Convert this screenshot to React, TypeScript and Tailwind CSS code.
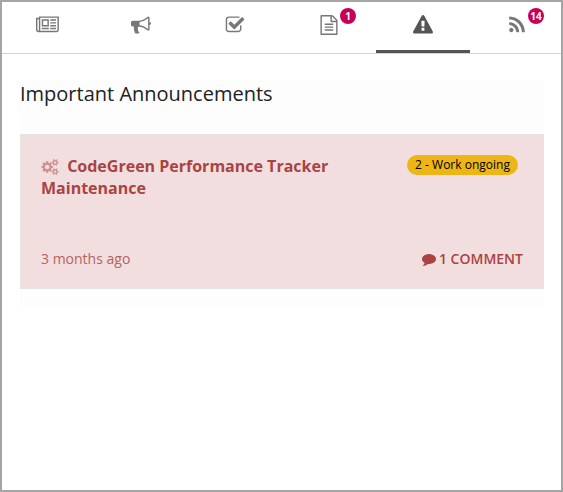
import React from "react";

const ICONS = {
  newspaper: {
    w: 2048,
    d: "M1024 512h-384v384h384v-384zm128 640v128h-640v-128h640zm0-768v640h-640v-640h640zm640 768v128h-512v-128h512zm0-256v128h-512v-128h512zm0-256v128h-512v-128h512zm0-256v128h-512v-128h512zm-1536 960v-960h-128v960q0 26 19 45t45 19 45-19 19-45zm1664 0v-1088h-1536v1088q0 33-11 64h1483q26 0 45-19t19-45zm128-1216v1216q0 80-56 136t-136 56h-1664q-80 0-136-56t-56-136v-1088h256v-128h1792z",
  },
  bullhorn: {
    w: 1792,
    d: "M1664 640q53 0 90.5 37.5t37.5 90.5-37.5 90.5-90.5 37.5v384q0 52-38 90t-90 38q-417-347-812-380-58 19-91 66t-31 100.5 40 92.5q-20 33-23 65.5t6 58 33.5 55 48 50 61.5 50.5q-29 58-111.5 83t-168.5 11.5-132-55.5q-7-23-29.5-87.5t-32-94.5-23-89-15-101 3.5-98.5 22-110.5h-122q-66 0-113-47t-47-113v-192q0-66 47-113t113-47h480q435 0 896-384 52 0 90 38t38 90v384zm-128 604v-954q-394 302-768 343v270q377 42 768 341z",
  },
  check: {
    w: 1792,
    d: "M1472 930v318q0 119-84.5 203.5t-203.5 84.5h-832q-119 0-203.5-84.5t-84.5-203.5v-832q0-119 84.5-203.5t203.5-84.5h832q63 0 117 25 15 7 18 23 3 17-9 29l-49 49q-10 10-23 10-3 0-9-2-23-6-45-6h-832q-66 0-113 47t-47 113v832q0 66 47 113t113 47h832q66 0 113-47t47-113v-254q0-13 9-22l64-64q10-10 23-10 6 0 12 3 20 8 20 29zm231-489l-814 814q-24 24-57 24t-57-24l-430-430q-24-24-24-57t24-57l110-110q24-24 57-24t57 24l263 263 647-647q24-24 57-24t57 24l110 110q24 24 24 57t-24 57z",
  },
  file: {
    w: 1792,
    d: "M1596 380q28 28 48 76t20 88v1152q0 40-28 68t-68 28h-1344q-40 0-68-28t-28-68v-1600q0-40 28-68t68-28h896q40 0 88 20t76 48zm-444-244v376h376q-10-29-22-41l-313-313q-12-12-41-22zm384 1528v-1024h-416q-40 0-68-28t-28-68v-416h-768v1536h1280zm-1024-864q0-14 9-23t23-9h704q14 0 23 9t9 23v64q0 14-9 23t-23 9h-704q-14 0-23-9t-9-23v-64zm736 224q14 0 23 9t9 23v64q0 14-9 23t-23 9h-704q-14 0-23-9t-9-23v-64q0-14 9-23t23-9h704zm0 256q14 0 23 9t9 23v64q0 14-9 23t-23 9h-704q-14 0-23-9t-9-23v-64q0-14 9-23t23-9h704z",
  },
  warning: {
    w: 1792,
    d: "M1024 1375v-190q0-14-9.5-23.5t-22.5-9.5h-192q-13 0-22.5 9.5t-9.5 23.5v190q0 14 9.5 23.5t22.5 9.5h192q13 0 22.5-9.5t9.5-23.5zm-2-374l18-459q0-12-10-19-13-11-24-11h-220q-11 0-24 11-10 7-10 21l17 457q0 10 10 16.5t24 6.5h185q14 0 23.5-6.5t10.5-16.5zm-14-934l768 1408q35 63-2 126-17 29-46.5 46t-63.5 17h-1536q-34 0-63.5-17t-46.5-46q-37-63-2-126l768-1408q17-31 47-49t65-18 65 18 47 49z",
  },
  rss: {
    w: 1792,
    d: "M576 1344q0 80-56 136t-136 56-136-56-56-136 56-136 136-56 136 56 56 136zm512 123q2 28-17 48-18 21-47 21h-135q-25 0-43-16.5t-20-41.5q-22-229-184.5-391.5t-391.5-184.5q-25-2-41.5-20t-16.5-43v-135q0-29 21-47 17-17 43-17h5q160 13 306 80.5t259 181.5q114 113 181.5 259t80.5 306zm512 2q2 27-18 47-18 20-46 20h-143q-26 0-44.5-17.5t-19.5-42.5q-12-215-101-408.5t-231.5-336-336-231.5-408.5-102q-25-1-42.5-19.5t-17.5-43.5v-143q0-28 20-46 18-18 44-18h3q262 13 501.5 120t425.5 294q187 186 294 425.5t120 501.5z",
  },
  cogs: {
    w: 1920,
    d: "M832 896q0-106-75-181t-181-75-181 75-75 181 75 181 181 75 181-75 75-181zm768 512q0-52-38-90t-90-38-90 38-38 90q0 53 37.5 90.5t90.5 37.5 90.5-37.5 37.5-90.5zm0-1024q0-52-38-90t-90-38-90 38-38 90q0 53 37.5 90.5t90.5 37.5 90.5-37.5 37.5-90.5zm-384 421v185q0 10-7 19.5t-16 10.5l-155 24q-11 35-32 76 34 48 90 115 7 11 7 20 0 12-7 19-23 30-82.5 89.5t-78.5 59.5q-11 0-21-7l-115-90q-37 19-77 31-11 108-23 155-7 24-30 24h-186q-11 0-20-7.5t-10-17.5l-23-153q-34-10-75-31l-118 89q-7 7-20 7-11 0-21-8-144-133-144-160 0-9 7-19 10-14 41-53t47-61q-23-44-35-82l-152-24q-10-1-17-9.5t-7-19.5v-185q0-10 7-19.5t16-10.5l155-24q11-35 32-76-34-48-90-115-7-11-7-20 0-12 7-20 22-30 82-89t79-59q11 0 21 7l115 90q34-18 77-32 11-108 23-154 7-24 30-24h186q11 0 20 7.5t10 17.5l23 153q34 10 75 31l118-89q8-7 20-7 11 0 21 8 144 133 144 160 0 8-7 19-12 16-42 54t-45 60q23 48 34 82l152 23q10 2 17 10.5t7 19.5zm640 533v140q0 16-149 31-12 27-30 52 51 113 51 138 0 4-4 7-122 71-124 71-8 0-46-47t-52-68q-20 2-30 2t-30-2q-14 21-52 68t-46 47q-2 0-124-71-4-3-4-7 0-25 51-138-18-25-30-52-149-15-149-31v-140q0-16 149-31 13-29 30-52-51-113-51-138 0-4 4-7 4-2 35-20t59-34 30-16q8 0 46 46.5t52 67.5q20-2 30-2t30 2q51-71 92-112l6-2q4 0 124 70 4 3 4 7 0 25-51 138 17 23 30 52 149 15 149 31zm0-1024v140q0 16-149 31-12 27-30 52 51 113 51 138 0 4-4 7-122 71-124 71-8 0-46-47t-52-68q-20 2-30 2t-30-2q-14 21-52 68t-46 47q-2 0-124-71-4-3-4-7 0-25 51-138-18-25-30-52-149-15-149-31v-140q0-16 149-31 13-29 30-52-51-113-51-138 0-4 4-7 4-2 35-20t59-34 30-16q8 0 46 46.5t52 67.5q20-2 30-2t30 2q51-71 92-112l6-2q4 0 124 70 4 3 4 7 0 25-51 138 17 23 30 52 149 15 149 31z",
  },
  comment: {
    w: 1792,
    d: "M1792 896q0 174-120 321.5t-326 233-450 85.5q-70 0-145-8-198 175-460 242-49 14-114 22-17 2-30.5-9t-17.5-29v-1q-3-4-.5-12t2-10 4.5-9.5l6-9 7-8.5 8-9q7-8 31-34.5t34.5-38 31-39.5 32.5-51 27-59 26-76q-157-89-247.5-220t-90.5-281q0-174 120-321.5t326-233 450-85.5 450 85.5 326 233 120 321.5z",
  },
};

type IconName = keyof typeof ICONS;

function Icon({ name, className }: { name: IconName; className: string }) {
  const icon = ICONS[name];
  return (
    <svg viewBox={`0 0 ${icon.w} 1792`} className={className} fill="currentColor" overflow="visible" aria-hidden="true">
      <path d={icon.d} />
    </svg>
  );
}

const TABS: { icon: IconName; badge?: string; active?: boolean }[] = [
  { icon: "newspaper" },
  { icon: "bullhorn" },
  { icon: "check" },
  { icon: "file", badge: "1" },
  { icon: "warning", active: true },
  { icon: "rss", badge: "14" },
];

export default function App() {
  return (
    <div className="h-[492px] w-[563px] overflow-hidden border-2 border-[#a5a5a5] bg-white font-['Open_Sans',sans-serif]">
      <nav className="-ml-0.5 flex h-[52px] w-[564px] border-b border-[#d3d3d3]">
        {TABS.map((tab) => (
          <button
            key={tab.icon}
            className={
              tab.active
                ? "flex h-[51px] w-[94px] justify-center border-b-[3px] border-[#555] pt-[13px] text-[#555]"
                : "flex h-[51px] w-[94px] justify-center pt-[13px] text-[#777]"
            }
          >
            <span className="relative flex">
              <Icon name={tab.icon} className="h-5 w-auto" />
              {tab.badge && (
                <span className="absolute -top-[7px] left-[21px] flex size-4 items-center justify-center rounded-full bg-[#c70058] text-[10px] leading-none font-bold text-white">
                  {tab.badge}
                </span>
              )}
            </span>
          </button>
        ))}
      </nav>

      <main className="mt-[26px] ml-[18px] h-[227px] w-[524px] bg-[#fdfdfd]">
        <h1 className="h-[54px] text-[20px] leading-[27px] font-normal text-[#222]">Important Announcements</h1>
        <article className="flex h-[155px] flex-col justify-between border border-[#e4e4e4] bg-[#f2dede] px-5 pt-5 pb-[19px] text-[#a94442]">
          <div className="flex items-start justify-between">
            <h2 className="w-[310px] text-[16px] leading-[22px] font-bold">
              <Icon name="cogs" className="mr-2 ml-px inline-block h-4 w-auto align-[-3px] opacity-50" />
              CodeGreen Performance Tracker Maintenance
            </h2>
            <span className="mr-[5px] flex h-5 w-[111px] items-center justify-center rounded-full bg-[#eeb516] text-[12px] leading-none text-black">
              2 - Work ongoing
            </span>
          </div>
          <div className="flex items-center justify-between text-[14px] leading-5">
            <span className="opacity-80">3 months ago</span>
            <span className="flex items-center font-semibold">
              <Icon name="comment" className="mr-[3px] size-3.5" />1 COMMENT
            </span>
          </div>
        </article>
      </main>
    </div>
  );
}
